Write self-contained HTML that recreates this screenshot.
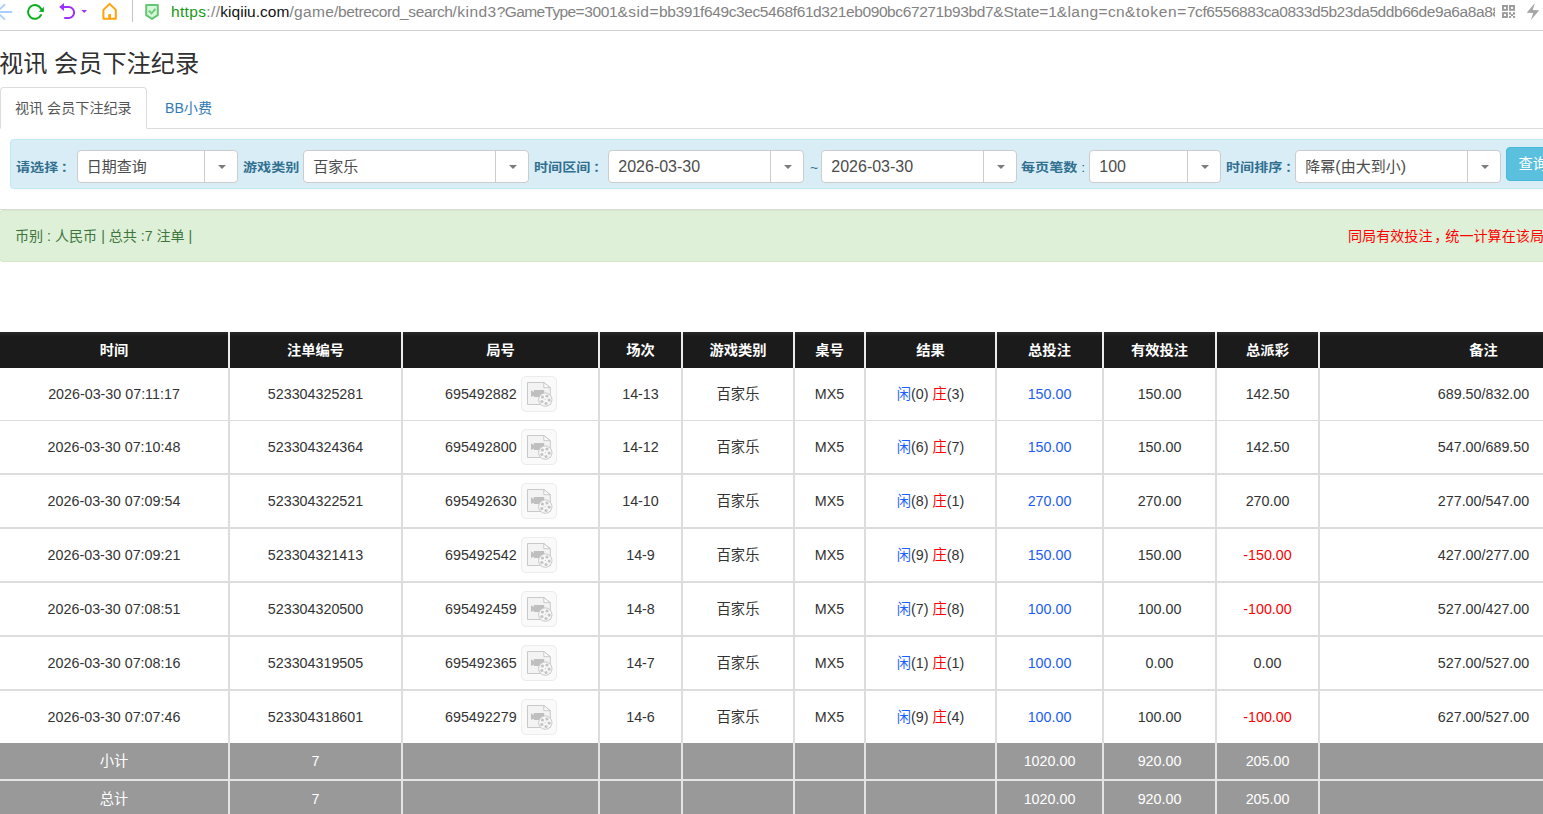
<!DOCTYPE html>
<html lang="zh-CN">
<head>
<meta charset="utf-8">
<title>视讯 会员下注纪录</title>
<style>
*{box-sizing:border-box;}
html,body{margin:0;padding:0;}
body{width:1543px;height:814px;overflow:hidden;background:#fff;position:relative;color:#333;
 font-family:"Liberation Sans","Noto Sans CJK SC",sans-serif;font-size:14.3px;}
/* browser chrome */
#bar{position:absolute;left:0;top:0;width:1543px;height:31px;border-bottom:1px solid #cfcfcf;background:#fff;}
#bar svg{position:absolute;}
#bar .vdiv{position:absolute;left:132px;top:0;width:1px;height:22px;background:#c4c4c4;}
#url{position:absolute;left:171px;top:0px;width:1324px;height:24px;overflow:hidden;white-space:nowrap;
 font-size:15.5px;line-height:24px;color:#828282;letter-spacing:0;}
#url .s{color:#149a14;} #url .d{color:#111;}
/* title */
h3{position:absolute;left:-1px;top:45px;margin:0;font-size:24.2px;font-weight:400;line-height:38px;color:#303030;white-space:nowrap;}
/* tabs */
#tabs{position:absolute;left:0;top:87px;width:1543px;height:42px;border-bottom:1px solid #ddd;font-size:14.1px;}
#tabs .on{position:absolute;left:0;top:0;width:147px;height:42px;border:1px solid #ddd;border-bottom-color:#fff;border-radius:4px 4px 0 0;
 background:#fff;color:#555;line-height:40px;padding-left:14px;white-space:nowrap;}
#tabs .off{position:absolute;left:165px;top:0;line-height:42px;color:#337ab7;white-space:nowrap;}
/* filter */
#flt{position:absolute;left:10px;top:139px;width:1640px;height:50px;background:#d9edf7;border:1px solid #bce8f1;border-radius:4px;}
#flt label{position:absolute;top:10px;line-height:32px;font-weight:700;color:#31708f;white-space:nowrap;font-size:14.1px;}
#flt label{transform:translateY(1.1px) scaleY(.88);transform-origin:50% 73%;}
#flt label b{font-weight:700;margin-left:2.5px;}
.sel{position:absolute;top:10px;height:33px;background:#fff;border:1px solid #ccc;border-radius:4px;font-size:16px;line-height:31px;color:#4c4c4c;padding-left:9.3px;white-space:nowrap;}
.sel .c{font-size:15px;}
.sel i{position:absolute;right:0;top:0;width:33px;height:31px;border-left:1px solid #ccc;}
.sel i:after{content:"";position:absolute;left:13px;top:14px;border:4px solid transparent;border-top:4px solid #7c7c7c;border-bottom:0;}
#btn{position:absolute;left:1495px;top:7px;width:80px;height:34px;background:#5bc0de;border:1px solid #46b8da;border-radius:4px;color:#fff;font-size:14.3px;line-height:32px;padding-left:11.5px;}
/* alert */
#aline{position:absolute;left:0;top:209px;width:1543px;height:1px;background:#d9d9d9;}
#alert{position:absolute;left:-1px;top:210px;width:1660px;height:52px;background:#dff0d8;border:1px solid #d6e9c6;border-radius:4px;color:#3c763d;line-height:51px;font-size:14.1px;}
#alert .l{position:absolute;left:15px;top:0;white-space:nowrap;}
#alert .r{position:absolute;left:1348px;top:0;color:#f00;white-space:nowrap;}
/* table */
table{position:absolute;left:0;top:332px;width:1649px;border-collapse:separate;border-spacing:0;table-layout:fixed;}
th,td{padding:0;text-align:center;vertical-align:middle;white-space:nowrap;overflow:hidden;line-height:20px;}
th{height:36px;background:#1b1b1b;color:#fff;font-weight:700;font-size:14.3px;border-right:2px solid #ececec;background-image:linear-gradient(#2b2b2b,#1b1b1b 4px);}
td{border-right:2px solid #ddd;border-bottom:2px solid #ddd;height:54px;color:#333;}
tr.r1 td{height:53px;border-bottom-width:1px;}
tr.r7 td{height:52px;border-bottom:0;}
tr.f td{background:#999;color:#fff;border-right-color:#e4e4e4;border-bottom-color:#e4e4e4;height:38px;}
th span{display:inline-block;transform:translateY(.6px) scaleY(.93);}
.neg{color:#f00;}
.lnk{color:#1d5cf2;}
.xian{color:#1a62ff;}
.zhuang{color:#f00;}
.gn{display:inline-block;vertical-align:middle;margin-left:.8px;}
.vbtn{display:inline-block;vertical-align:middle;width:36px;height:36px;margin-left:4.2px;border:1px solid #ececec;border-radius:5px;background:#fafafa;position:relative;}
.vbtn svg{position:absolute;left:4px;top:4px;}
</style>
</head>
<body>
<div id="bar">
<!-- back -->
<svg style="left:0;top:2px" width="14" height="20" viewBox="0 0 14 20"><path d="M11.5 10H-2M4.5 2.8L-3.2 10L4.5 17.1" fill="none" stroke="#a8d0ff" stroke-width="1.9" stroke-linecap="round"/></svg>
<!-- reload -->
<svg style="left:25px;top:0" width="22" height="24" viewBox="25 0 22 24"><path d="M41.05 15.03A6.9 6.9 0 1 1 41.15 8.98" fill="none" stroke="#0ab01e" stroke-width="2" stroke-linecap="round"/><path d="M43.9 6.7V12L38.9 11.7z" fill="#0ab01e"/></svg>
<!-- undo -->
<svg style="left:57px;top:0" width="32" height="24" viewBox="57 0 32 24"><path d="M63.5 7H68.6A5.5 5.5 0 0 1 68.6 18H64.2" fill="none" stroke="#9b30ff" stroke-width="2"/><path d="M59.2 7L64 3v8z" fill="#9b30ff"/><path d="M81.4 10h5.6l-2.8 2.9z" fill="#9b30ff"/></svg>
<!-- home -->
<svg style="left:100px;top:1px" width="20" height="22" viewBox="0 0 20 22"><path d="M3.4 17.7V8.9L9.6 2.9L15.8 8.9V17.7Z" fill="none" stroke="#ffa30a" stroke-width="2" stroke-linejoin="round"/><path d="M9.6 17.7v-4.6" stroke="#ffa30a" stroke-width="2.8" fill="none"/></svg>
<div class="vdiv"></div>
<!-- shield -->
<svg style="left:143px;top:2px" width="18" height="20" viewBox="0 0 18 20"><path d="M3.2 3.1h11.6v10.1l-5.8 3.7l-5.8-3.7z" fill="#d4fadb" stroke="#69c474" stroke-width="2" stroke-linejoin="round"/><path d="M5.7 8.6l2.8 2.7l4-4.5" fill="none" stroke="#6fc87b" stroke-width="1.9"/></svg>
<div id="url"><span class="s" style="letter-spacing:0.346px">https</span><span style="letter-spacing:0.346px">://</span><span class="d" style="letter-spacing:0.018px">kiqiiu.com</span><span style="letter-spacing:0.321px">/game</span><span style="letter-spacing:-0.379px">/betrecord_search</span><span style="letter-spacing:0.454px">/kind3</span><span style="letter-spacing:-0.615px">?GameType</span><span style="letter-spacing:-0.349px">=3001</span><span style="letter-spacing:0.476px">&amp;sid=</span><span style="letter-spacing:-0.396px">bb391f649c3ec5468f61d321eb090bc67271b93bd7</span><span style="letter-spacing:-0.075px">&amp;State=1</span><span style="letter-spacing:0.403px">&amp;lang=cn</span><span style="letter-spacing:0.641px">&amp;token=</span><span style="letter-spacing:-0.422px">7cf6556883ca0833d5b23da5ddb66de9a6a8a8</span><span style="letter-spacing:0px">8</span></div>
<!-- qr -->
<svg style="left:1500px;top:3px" width="18" height="18" viewBox="1500 3 18 18"><g fill="none" stroke="#9a9a9a" stroke-width="1.9"><rect x="1502.95" y="5.95" width="4" height="3.9"/><rect x="1510" y="5.95" width="4" height="3.9"/><rect x="1502.95" y="13.1" width="4" height="3.9"/></g><g fill="#9a9a9a"><rect x="1509" y="12.2" width="2.1" height="2.4"/><rect x="1513" y="12.2" width="2.1" height="2.4"/><rect x="1511" y="14.1" width="2.1" height="2"/><rect x="1509" y="16" width="2.1" height="1.9"/><rect x="1513" y="16" width="2.1" height="1.9"/></g></svg>
<!-- bolt -->
<svg style="left:1524px;top:0" width="19" height="24" viewBox="1524 0 19 24"><path d="M1534.9 3.1L1526.7 12.7L1533.2 12.9L1531 19.9L1539.2 10.3L1532.7 10.1Z" fill="#a6a6a6"/></svg>
</div>
<h3>视讯 会员下注纪录</h3>
<div id="tabs"><div class="on">视讯 会员下注纪录</div><div class="off">BB小费</div></div>
<div id="flt">
<label style="left:5px">请选择<b>：</b></label><div class="sel" style="left:65.5px;width:161px"><span class="c">日期查询</span><i></i></div>
<label style="left:232px">游戏类别</label><div class="sel" style="left:292px;width:226px"><span class="c">百家乐</span><i></i></div>
<label style="left:523px">时间区间<b>：</b></label><div class="sel" style="left:597px;width:196px">2026-03-30<i></i></div>
<label style="left:799px;font-weight:400">~</label><div class="sel" style="left:810px;width:196px">2026-03-30<i></i></div>
<label style="left:1010px">每页笔数 <span style="font-weight:400">:</span></label><div class="sel" style="left:1078px;width:132px">100<i></i></div>
<label style="left:1215px">时间排序<b>：</b></label><div class="sel" style="left:1284px;width:206px"><span class="c">降幂</span>(<span class="c">由大到小</span>)<i></i></div>
<div id="btn">查询</div>
</div>
<div id="aline"></div>
<div id="alert"><span class="l">币别 : 人民币 | 总共 :7 注单 |</span><span class="r">同局有效投注<span style="margin-left:1.7px;margin-right:-3px">，</span>统一计算在该局结束时间</span></div>
<table>
<colgroup><col style="width:230px"><col style="width:173px"><col style="width:197px"><col style="width:83px"><col style="width:112px"><col style="width:71px"><col style="width:131px"><col style="width:107px"><col style="width:113px"><col style="width:103px"><col style="width:329px"></colgroup>
<thead><tr><th><span>时间</span></th><th><span>注单编号</span></th><th><span>局号</span></th><th><span>场次</span></th><th><span>游戏类别</span></th><th><span>桌号</span></th><th><span>结果</span></th><th><span>总投注</span></th><th><span>有效投注</span></th><th><span>总派彩</span></th><th><span>备注</span></th></tr></thead>
<tbody>
<tr class="r r1"><td>2026-03-30 07:11:17</td><td>523304325281</td><td><span class="gn">695492882</span><span class="vbtn"><svg width="28" height="27" viewBox="0 0 28 27"><path d="M1.5 1.5H17.8L24.3 6.7V23.5H1.5Z" fill="#f3f3f3" stroke="#c9c9c9" stroke-width="1"/><path d="M17.8 1.5V6.7H24.3Z" fill="#fbfbfb" stroke="#c9c9c9" stroke-width="1" stroke-linejoin="round"/><path d="M5 9.3L7.8 11V9.1H18.2V16.1H7.8V14.4L5 16.1Z" fill="#bfbfbf"/><circle cx="19.3" cy="18.6" r="6.7" fill="#f7f7f7" stroke="#c9c9c9" stroke-width="1"/><circle cx="23.17" cy="19.08" r="1.55" fill="#c3c3c3"/><circle cx="20.04" cy="22.43" r="1.55" fill="#c3c3c3"/><circle cx="15.89" cy="20.49" r="1.55" fill="#c3c3c3"/><circle cx="16.45" cy="15.94" r="1.55" fill="#c3c3c3"/><circle cx="20.95" cy="15.07" r="1.55" fill="#c3c3c3"/><circle cx="19.3" cy="18.6" r="0.6" fill="#c3c3c3"/></svg></span></td><td>14-13</td><td>百家乐</td><td>MX5</td><td><span class="xian">闲</span>(0) <span class="zhuang">庄</span>(3)</td><td><span class="lnk">150.00</span></td><td>150.00</td><td>142.50</td><td>689.50/832.00</td></tr>
<tr class="r r2"><td>2026-03-30 07:10:48</td><td>523304324364</td><td><span class="gn">695492800</span><span class="vbtn"><svg width="28" height="27" viewBox="0 0 28 27"><path d="M1.5 1.5H17.8L24.3 6.7V23.5H1.5Z" fill="#f3f3f3" stroke="#c9c9c9" stroke-width="1"/><path d="M17.8 1.5V6.7H24.3Z" fill="#fbfbfb" stroke="#c9c9c9" stroke-width="1" stroke-linejoin="round"/><path d="M5 9.3L7.8 11V9.1H18.2V16.1H7.8V14.4L5 16.1Z" fill="#bfbfbf"/><circle cx="19.3" cy="18.6" r="6.7" fill="#f7f7f7" stroke="#c9c9c9" stroke-width="1"/><circle cx="23.17" cy="19.08" r="1.55" fill="#c3c3c3"/><circle cx="20.04" cy="22.43" r="1.55" fill="#c3c3c3"/><circle cx="15.89" cy="20.49" r="1.55" fill="#c3c3c3"/><circle cx="16.45" cy="15.94" r="1.55" fill="#c3c3c3"/><circle cx="20.95" cy="15.07" r="1.55" fill="#c3c3c3"/><circle cx="19.3" cy="18.6" r="0.6" fill="#c3c3c3"/></svg></span></td><td>14-12</td><td>百家乐</td><td>MX5</td><td><span class="xian">闲</span>(6) <span class="zhuang">庄</span>(7)</td><td><span class="lnk">150.00</span></td><td>150.00</td><td>142.50</td><td>547.00/689.50</td></tr>
<tr class="r r3"><td>2026-03-30 07:09:54</td><td>523304322521</td><td><span class="gn">695492630</span><span class="vbtn"><svg width="28" height="27" viewBox="0 0 28 27"><path d="M1.5 1.5H17.8L24.3 6.7V23.5H1.5Z" fill="#f3f3f3" stroke="#c9c9c9" stroke-width="1"/><path d="M17.8 1.5V6.7H24.3Z" fill="#fbfbfb" stroke="#c9c9c9" stroke-width="1" stroke-linejoin="round"/><path d="M5 9.3L7.8 11V9.1H18.2V16.1H7.8V14.4L5 16.1Z" fill="#bfbfbf"/><circle cx="19.3" cy="18.6" r="6.7" fill="#f7f7f7" stroke="#c9c9c9" stroke-width="1"/><circle cx="23.17" cy="19.08" r="1.55" fill="#c3c3c3"/><circle cx="20.04" cy="22.43" r="1.55" fill="#c3c3c3"/><circle cx="15.89" cy="20.49" r="1.55" fill="#c3c3c3"/><circle cx="16.45" cy="15.94" r="1.55" fill="#c3c3c3"/><circle cx="20.95" cy="15.07" r="1.55" fill="#c3c3c3"/><circle cx="19.3" cy="18.6" r="0.6" fill="#c3c3c3"/></svg></span></td><td>14-10</td><td>百家乐</td><td>MX5</td><td><span class="xian">闲</span>(8) <span class="zhuang">庄</span>(1)</td><td><span class="lnk">270.00</span></td><td>270.00</td><td>270.00</td><td>277.00/547.00</td></tr>
<tr class="r r4"><td>2026-03-30 07:09:21</td><td>523304321413</td><td><span class="gn">695492542</span><span class="vbtn"><svg width="28" height="27" viewBox="0 0 28 27"><path d="M1.5 1.5H17.8L24.3 6.7V23.5H1.5Z" fill="#f3f3f3" stroke="#c9c9c9" stroke-width="1"/><path d="M17.8 1.5V6.7H24.3Z" fill="#fbfbfb" stroke="#c9c9c9" stroke-width="1" stroke-linejoin="round"/><path d="M5 9.3L7.8 11V9.1H18.2V16.1H7.8V14.4L5 16.1Z" fill="#bfbfbf"/><circle cx="19.3" cy="18.6" r="6.7" fill="#f7f7f7" stroke="#c9c9c9" stroke-width="1"/><circle cx="23.17" cy="19.08" r="1.55" fill="#c3c3c3"/><circle cx="20.04" cy="22.43" r="1.55" fill="#c3c3c3"/><circle cx="15.89" cy="20.49" r="1.55" fill="#c3c3c3"/><circle cx="16.45" cy="15.94" r="1.55" fill="#c3c3c3"/><circle cx="20.95" cy="15.07" r="1.55" fill="#c3c3c3"/><circle cx="19.3" cy="18.6" r="0.6" fill="#c3c3c3"/></svg></span></td><td>14-9</td><td>百家乐</td><td>MX5</td><td><span class="xian">闲</span>(9) <span class="zhuang">庄</span>(8)</td><td><span class="lnk">150.00</span></td><td>150.00</td><td class="neg">-150.00</td><td>427.00/277.00</td></tr>
<tr class="r r5"><td>2026-03-30 07:08:51</td><td>523304320500</td><td><span class="gn">695492459</span><span class="vbtn"><svg width="28" height="27" viewBox="0 0 28 27"><path d="M1.5 1.5H17.8L24.3 6.7V23.5H1.5Z" fill="#f3f3f3" stroke="#c9c9c9" stroke-width="1"/><path d="M17.8 1.5V6.7H24.3Z" fill="#fbfbfb" stroke="#c9c9c9" stroke-width="1" stroke-linejoin="round"/><path d="M5 9.3L7.8 11V9.1H18.2V16.1H7.8V14.4L5 16.1Z" fill="#bfbfbf"/><circle cx="19.3" cy="18.6" r="6.7" fill="#f7f7f7" stroke="#c9c9c9" stroke-width="1"/><circle cx="23.17" cy="19.08" r="1.55" fill="#c3c3c3"/><circle cx="20.04" cy="22.43" r="1.55" fill="#c3c3c3"/><circle cx="15.89" cy="20.49" r="1.55" fill="#c3c3c3"/><circle cx="16.45" cy="15.94" r="1.55" fill="#c3c3c3"/><circle cx="20.95" cy="15.07" r="1.55" fill="#c3c3c3"/><circle cx="19.3" cy="18.6" r="0.6" fill="#c3c3c3"/></svg></span></td><td>14-8</td><td>百家乐</td><td>MX5</td><td><span class="xian">闲</span>(7) <span class="zhuang">庄</span>(8)</td><td><span class="lnk">100.00</span></td><td>100.00</td><td class="neg">-100.00</td><td>527.00/427.00</td></tr>
<tr class="r r6"><td>2026-03-30 07:08:16</td><td>523304319505</td><td><span class="gn">695492365</span><span class="vbtn"><svg width="28" height="27" viewBox="0 0 28 27"><path d="M1.5 1.5H17.8L24.3 6.7V23.5H1.5Z" fill="#f3f3f3" stroke="#c9c9c9" stroke-width="1"/><path d="M17.8 1.5V6.7H24.3Z" fill="#fbfbfb" stroke="#c9c9c9" stroke-width="1" stroke-linejoin="round"/><path d="M5 9.3L7.8 11V9.1H18.2V16.1H7.8V14.4L5 16.1Z" fill="#bfbfbf"/><circle cx="19.3" cy="18.6" r="6.7" fill="#f7f7f7" stroke="#c9c9c9" stroke-width="1"/><circle cx="23.17" cy="19.08" r="1.55" fill="#c3c3c3"/><circle cx="20.04" cy="22.43" r="1.55" fill="#c3c3c3"/><circle cx="15.89" cy="20.49" r="1.55" fill="#c3c3c3"/><circle cx="16.45" cy="15.94" r="1.55" fill="#c3c3c3"/><circle cx="20.95" cy="15.07" r="1.55" fill="#c3c3c3"/><circle cx="19.3" cy="18.6" r="0.6" fill="#c3c3c3"/></svg></span></td><td>14-7</td><td>百家乐</td><td>MX5</td><td><span class="xian">闲</span>(1) <span class="zhuang">庄</span>(1)</td><td><span class="lnk">100.00</span></td><td>0.00</td><td>0.00</td><td>527.00/527.00</td></tr>
<tr class="r r7"><td>2026-03-30 07:07:46</td><td>523304318601</td><td><span class="gn">695492279</span><span class="vbtn"><svg width="28" height="27" viewBox="0 0 28 27"><path d="M1.5 1.5H17.8L24.3 6.7V23.5H1.5Z" fill="#f3f3f3" stroke="#c9c9c9" stroke-width="1"/><path d="M17.8 1.5V6.7H24.3Z" fill="#fbfbfb" stroke="#c9c9c9" stroke-width="1" stroke-linejoin="round"/><path d="M5 9.3L7.8 11V9.1H18.2V16.1H7.8V14.4L5 16.1Z" fill="#bfbfbf"/><circle cx="19.3" cy="18.6" r="6.7" fill="#f7f7f7" stroke="#c9c9c9" stroke-width="1"/><circle cx="23.17" cy="19.08" r="1.55" fill="#c3c3c3"/><circle cx="20.04" cy="22.43" r="1.55" fill="#c3c3c3"/><circle cx="15.89" cy="20.49" r="1.55" fill="#c3c3c3"/><circle cx="16.45" cy="15.94" r="1.55" fill="#c3c3c3"/><circle cx="20.95" cy="15.07" r="1.55" fill="#c3c3c3"/><circle cx="19.3" cy="18.6" r="0.6" fill="#c3c3c3"/></svg></span></td><td>14-6</td><td>百家乐</td><td>MX5</td><td><span class="xian">闲</span>(9) <span class="zhuang">庄</span>(4)</td><td><span class="lnk">100.00</span></td><td>100.00</td><td class="neg">-100.00</td><td>627.00/527.00</td></tr><tr class="f"><td>小计</td><td>7</td><td></td><td></td><td></td><td></td><td></td><td>1020.00</td><td>920.00</td><td>205.00</td><td></td></tr>
<tr class="f"><td>总计</td><td>7</td><td></td><td></td><td></td><td></td><td></td><td>1020.00</td><td>920.00</td><td>205.00</td><td></td></tr>
</tbody>
</table>
</body>
</html>
